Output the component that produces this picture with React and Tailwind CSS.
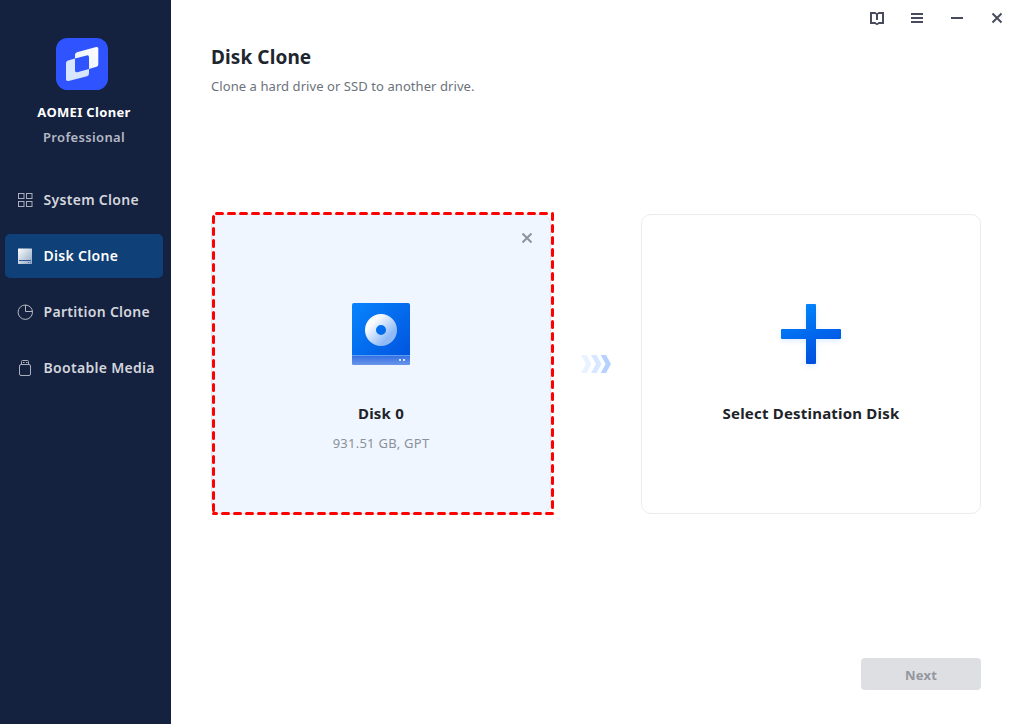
import React, { useState } from "react";

const GridIcon = () => (
    <svg width="16" height="16" viewBox="0 0 16 16" fill="none" stroke="#a9afbb">
        <rect x="1.5" y="1.5" width="5.5" height="5" />
        <rect x="9.5" y="1.5" width="5.5" height="5" />
        <rect x="1.5" y="9.5" width="5.5" height="5" />
        <rect x="9.5" y="9.5" width="5.5" height="5" />
    </svg>
);

const DiskIcon = () => (
    <svg width="16" height="16" viewBox="0 0 16 16">
        <defs>
            <linearGradient id="navDisk" x1="0" y1="0" x2="1" y2="1">
                <stop offset="0" stopColor="#ffffff" />
                <stop offset="1" stopColor="#8fa6c4" />
            </linearGradient>
        </defs>
        <rect x="1" y="0.5" width="14" height="15.5" rx="0.5" fill="url(#navDisk)" />
        <path d="M2 12.5h12" stroke="#2c5c93" />
        <path d="M11 14.5h1M13 14.5h1" stroke="#5f83ad" />
    </svg>
);

const PieIcon = () => (
    <svg width="16" height="16" viewBox="0 0 16 16" fill="none" stroke="#b3b8c3">
        <circle cx="8.3" cy="8.2" r="7.2" />
        <path d="M8.5 1V7.5H15.5" />
    </svg>
);

const UsbIcon = () => (
    <svg width="16" height="16" viewBox="0 0 16 16" fill="none" stroke="#a9afbb">
        <path d="M4.5 4.5v-3q0-1 1-1h5q1 0 1 1v3" />
        <path d="M6 2.5h1.5M9 2.5h1.5" />
        <rect x="2.5" y="4.5" width="11" height="11" rx="1.5" />
    </svg>
);

const menuItems = [
    { name: "System Clone", icon: GridIcon },
    { name: "Disk Clone", icon: DiskIcon },
    { name: "Partition Clone", icon: PieIcon },
    { name: "Bootable Media", icon: UsbIcon },
];

const Logo = () => (
    <svg width="52" height="52" viewBox="0 0 52 52">
        <defs>
            <linearGradient id="logoBack" x1="1" y1="0" x2="0" y2="1">
                <stop offset="0" stopColor="#ffffff" />
                <stop offset="1" stopColor="#e4edff" />
            </linearGradient>
        </defs>
        <rect width="52" height="52" rx="11.5" fill="#2f54ff" />
        <path
            d="M21 14.2L40.2 9Q42.3 8.5 42.3 10.6V26.5Q42.3 28.3 40.5 28.8L33 31V19.2Q33 16.8 30.7 17.4L19 20.5V16.8Q19 14.8 21 14.2Z"
            fill="url(#logoBack)"
        />
        <path
            d="M12 22.4L19 20.5V32.5Q19 34.8 21.3 34.2L33 31V35.5Q33 37.6 31 38.2L12.5 43Q10 43.6 10 41.3V25Q10 23 12 22.4Z"
            fill="#d7e5ff"
        />
    </svg>
);

const HardDrive = () => (
    <svg width="58" height="62" viewBox="0 0 58 62">
        <defs>
            <linearGradient id="driveBody" x1="0" y1="0" x2="1" y2="1">
                <stop offset="0" stopColor="#0785fd" />
                <stop offset="1" stopColor="#0050dc" />
            </linearGradient>
            <linearGradient id="driveBase" x1="0" y1="0" x2="0" y2="1">
                <stop offset="0" stopColor="#2f6ce2" />
                <stop offset="1" stopColor="#6b96ea" />
            </linearGradient>
            <linearGradient id="platter" x1="0" y1="0" x2="1" y2="1">
                <stop offset="0.15" stopColor="#f8fbff" />
                <stop offset="0.85" stopColor="#8fbaf7" />
            </linearGradient>
        </defs>
        <rect width="58" height="62" rx="2" fill="url(#driveBody)" />
        <path d="M0 52h58v8a2 2 0 0 1-2 2H2a2 2 0 0 1-2-2z" fill="url(#driveBase)" />
        <path d="M0 52.5h58" stroke="#5d9df4" />
        <circle cx="29" cy="27" r="10.5" fill="none" stroke="url(#platter)" strokeWidth="11" />
        <path d="M47 57h2M51 57h2" stroke="#d5e3ff" strokeWidth="2" />
    </svg>
);

const Arrows = () => (
    <svg width="30" height="20" viewBox="0 0 30 20">
        <path d="M0 1h5.5l5 9-5 9H0l5-9z" fill="#e9f2ff" />
        <path d="M10 1h5.5l5 9-5 9H10l5-9z" fill="#d7e7ff" />
        <path d="M19.7 1h5.3l5 9-5 9h-5.3l5-9z" fill="#b5d2ff" />
    </svg>
);

const PlusIcon = () => (
    <svg width="80" height="80" viewBox="0 0 80 80">
        <defs>
            <linearGradient id="plus" x1="0.3" y1="0" x2="0.7" y2="1">
                <stop offset="0" stopColor="#0785fd" />
                <stop offset="1" stopColor="#004bdc" />
            </linearGradient>
            <filter id="plusGlow" x="-20%" y="-20%" width="140%" height="140%">
                <feDropShadow dx="0" dy="2" stdDeviation="2.5" floodColor="#0068ee" floodOpacity="0.13" />
            </filter>
        </defs>
        <path
            d="M36 10h8q1 0 1 1v24h24q1 0 1 1v8q0 1-1 1H45v24q0 1-1 1h-8q-1 0-1-1V45H11q-1 0-1-1v-8q0-1 1-1h24V11q0-1 1-1z"
            fill="url(#plus)"
            filter="url(#plusGlow)"
        />
    </svg>
);

// Dashed frame around the selected source disk
const Highlight = () => (
    <svg
        className="absolute -top-1 -left-px pointer-events-none"
        width="344"
        height="305"
        viewBox="0 0 344 305"
        fill="none"
        stroke="#fe0000"
        strokeWidth="3"
        strokeLinecap="round"
        strokeDasharray="6 6"
    >
        <path d="M5.5 2.5H340" />
        <path d="M341.5 2.5V301" />
        <path d="M341.5 302.5H2.5" />
        <path d="M2.5 5.5V301" />
    </svg>
);

const WindowControls = () => (
    <div className="h-9 flex items-center justify-end gap-6 pr-[13px] text-[#484b5b]">
        <button aria-label="Manual">
            <svg width="16" height="16" viewBox="0 0 16 16" fill="none" stroke="currentColor" strokeWidth="2">
                <path d="M6.6 13H2V3h4.6M9.4 3H14v10H9.4" />
                <path d="M6 2.8L8 4.2L10 2.8M6 13L8 14.2L10 13" strokeWidth="1.6" />
                <path d="M8 4v6" />
            </svg>
        </button>
        <button aria-label="Menu">
            <svg width="16" height="16" viewBox="0 0 16 16" stroke="currentColor" strokeWidth="2">
                <path d="M2 4h12M2 8h12M2 12h12" />
            </svg>
        </button>
        <button aria-label="Minimize">
            <svg width="16" height="16" viewBox="0 0 16 16" stroke="currentColor" strokeWidth="2">
                <path d="M2 8h12" />
            </svg>
        </button>
        <button aria-label="Close">
            <svg width="16" height="16" viewBox="0 0 16 16" stroke="currentColor" strokeWidth="2">
                <path d="M3.5 3.5l9 9M12.5 3.5l-9 9" />
            </svg>
        </button>
    </div>
);

function App() {
    const [active, setActive] = useState("Disk Clone");

    return (
        <div className="flex w-[1018px] h-[724px] overflow-hidden bg-white font-['Noto_Sans','Open_Sans',sans-serif]">
            <aside className="w-[171px] shrink-0 bg-[#14213f] flex flex-col">
                <div className="flex flex-col items-center pt-[38px] pr-[3px]">
                    <div className="ml-[-4px] w-[52px]">
                        <Logo />
                    </div>
                    <h2 className="mt-3 text-[13px] leading-5 font-bold tracking-[0.33px] text-white whitespace-nowrap">
                        AOMEI Cloner
                    </h2>
                    <p className="mt-[5px] text-[13px] leading-5 font-semibold tracking-[0.35px] text-[#b4b9c5] whitespace-nowrap">
                        Professional
                    </p>
                </div>
                <nav className="mt-[31px] pl-[5px] pr-2 flex flex-col gap-3">
                    {menuItems.map(({ name, icon: Icon }) => (
                        <button
                            key={name}
                            onClick={() => setActive(name)}
                            className={`h-11 pl-3 flex items-center gap-[10.5px] rounded-[5px] text-sm font-semibold tracking-[0.3px] whitespace-nowrap ${
                                active === name ? "bg-[#0f4077] text-white" : "text-[#d3d6dc]"
                            }`}
                        >
                            <Icon />
                            <span>{name}</span>
                        </button>
                    ))}
                </nav>
            </aside>

            <main className="flex-1 flex flex-col">
                <WindowControls />
                <header className="pl-10 pt-[6px]">
                    <h1 className="text-[19px] leading-[30px] font-bold tracking-[0.1px] text-[#21262e]">
                        Disk Clone
                    </h1>
                    <p className="mt-1 text-[13px] leading-5 tracking-[0.07px] text-[#6c727b]">
                        Clone a hard drive or SSD to another drive.
                    </p>
                </header>

                <section className="mt-[118px] pl-10 pr-[37px] flex items-center justify-between">
                    <div className="relative w-[340px] h-[300px] rounded-[10px] border border-[#e2e6ec] bg-[#eff6ff]">
                        <div className="flex flex-col items-center pt-[88px]">
                            <HardDrive />
                            <h3 className="mt-[38px] text-[15px] leading-5 font-bold tracking-[0.2px] text-[#1e2329]">
                                Disk 0
                            </h3>
                            <p className="mt-[10px] text-[13px] leading-5 tracking-[0.25px] text-[#8b919a]">
                                931.51 GB, GPT
                            </p>
                        </div>
                        <button aria-label="Remove disk" className="absolute top-[18px] right-[18px]">
                            <svg width="10" height="10" viewBox="0 0 10 10" stroke="#8b939f" strokeWidth="2">
                                <path d="M0.5 0.5l9 9M9.5 0.5l-9 9" />
                            </svg>
                        </button>
                        <Highlight />
                    </div>
                    <Arrows />
                    <div className="w-[340px] h-[300px] rounded-[10px] border border-[#ebebed] bg-white flex flex-col items-center pt-[79px]">
                        <PlusIcon />
                        <h3 className="mt-[29px] text-[15px] leading-5 font-bold tracking-[0.2px] text-[#1e2329]">
                            Select Destination Disk
                        </h3>
                    </div>
                </section>

                <footer className="mt-auto pr-[37px] pb-[34px] flex justify-end">
                    <button
                        disabled
                        className="w-[120px] h-8 pt-[3px] rounded bg-[#dedfe3] text-[13px] font-bold tracking-[0.25px] text-[#94979d]"
                    >
                        Next
                    </button>
                </footer>
            </main>
        </div>
    );
}

export default App;
